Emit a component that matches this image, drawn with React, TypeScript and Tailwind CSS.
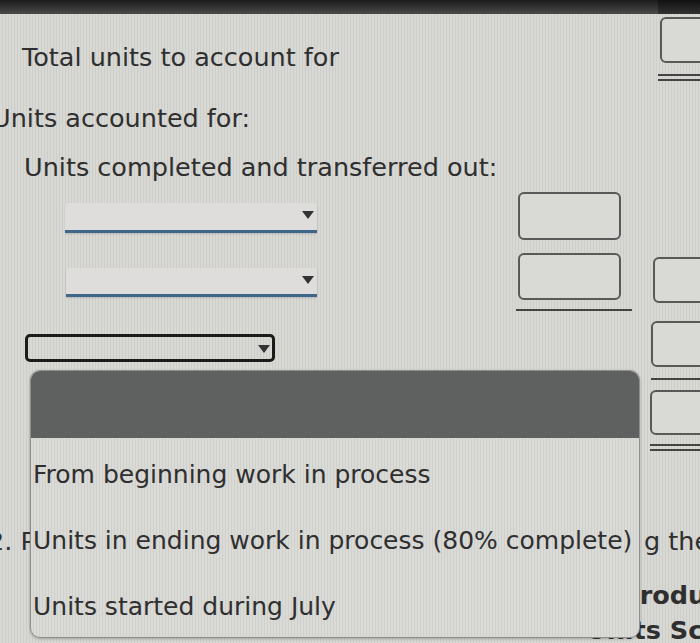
import React from 'react';

function Box({ className = '' }: { className?: string }) {
    return <div className={`shrink-0 rounded-[6px] border-2 border-[#595959] bg-[#d9d9d6] ${className}`}></div>;
}

function Arrow() {
    return (
        <svg width="12" height="8" viewBox="0 0 12 8" className="shrink-0">
            <path d="M0 0 L12 0 L6 8 Z" fill="#333" />
        </svg>
    );
}

function Dropdown({ className = '' }: { className?: string }) {
    return (
        <div className={`flex items-start justify-end rounded-t-[3px] bg-[#dedddb] border-b-[3px] border-[#3f6789] shadow-[0_1px_2px_rgba(0,0,0,0.15)] pr-[3px] pt-[8px] ${className}`}>
            <Arrow />
        </div>
    );
}

export default function App() {
    const options = [
        'From beginning work in process',
        'Units in ending work in process (80% complete)',
        'Units started during July',
    ];

    return (
        <div className="relative w-[700px] h-[643px] overflow-hidden bg-[#d5d5d1] bg-[repeating-linear-gradient(90deg,#d8d8d4_0px,#d8d8d4_2px,#cdcdc9_2px,#cdcdc9_3px)] text-[#2f2f2f] font-['DejaVu_Sans',Verdana,sans-serif] text-[25.5px] leading-[30px]">
            {/* top edge of the screen */}
            <div className="flex h-[14px]">
                <div className="flex-1 bg-gradient-to-b from-[#1c1c1c] to-[#4a4a4a]"></div>
                <div className="w-[42px] bg-gradient-to-b from-[#111] to-[#333]"></div>
            </div>

            {/* row 1 */}
            <div className="flex h-[78px]">
                <div className="w-[518px] shrink-0 pl-[22px] pt-[28px] whitespace-nowrap">Total units to account for</div>
                <div className="w-[134px] shrink-0"></div>
                <div className="w-[60px] shrink-0 pl-[8px] pt-[3px]">
                    <Box className="w-[60px] h-[46px]" />
                    <div className="mt-[11px] -ml-[2px] w-[60px] h-[2px] bg-[#444]"></div>
                    <div className="mt-[3px] -ml-[2px] w-[60px] h-[2px] bg-[#444]"></div>
                </div>
            </div>

            {/* row 2 */}
            <div className="h-[50px] pt-[11px] -ml-[8px] whitespace-nowrap">Units accounted for:</div>

            {/* row 3 */}
            <div className="h-[48px] pt-[10px] pl-[24px] whitespace-nowrap">Units completed and transferred out:</div>

            {/* row 4 */}
            <div className="flex h-[55px]">
                <div className="w-[518px] shrink-0 pl-[65px] pt-[13px]">
                    <Dropdown className="w-[252px] h-[30px]" />
                </div>
                <div className="w-[134px] shrink-0 pt-[2px]">
                    <Box className="w-[103px] h-[48px]" />
                </div>
            </div>

            {/* row 5 */}
            <div className="flex h-[70px]">
                <div className="w-[518px] shrink-0 pl-[66px] pt-[23px]">
                    <Dropdown className="w-[251px] h-[29px]" />
                </div>
                <div className="w-[134px] shrink-0 pt-[8px]">
                    <Box className="w-[103px] h-[47px]" />
                    <div className="mt-[9px] -ml-[2px] w-[116px] h-[2px] bg-[#444]"></div>
                </div>
                <div className="w-[60px] shrink-0 pl-[1px] pt-[12px]">
                    <Box className="w-[60px] h-[46px]" />
                </div>
            </div>

            {/* row 6 */}
            <div className="flex h-[70px]">
                <div className="w-[518px] shrink-0 pl-[25px] pt-[19px]">
                    <div className="flex w-[250px] h-[28px] items-start justify-end rounded-[5px] border-[3px] border-[#1b1b1b] pr-[2px] pt-[8px]">
                        <Arrow />
                    </div>
                </div>
                <div className="w-[133px] shrink-0"></div>
                <div className="w-[60px] shrink-0 pt-[6px]">
                    <Box className="w-[60px] h-[46px]" />
                    <div className="mt-[11px] w-[60px] h-[2px] bg-[#444]"></div>
                </div>
            </div>

            {/* row 7 */}
            <div className="flex h-[70px]">
                <div className="w-[518px] shrink-0"></div>
                <div className="w-[132px] shrink-0"></div>
                <div className="w-[60px] shrink-0 pt-[5px]">
                    <Box className="w-[60px] h-[45px]" />
                    <div className="mt-[9px] w-[60px] h-[2px] bg-[#444]"></div>
                    <div className="mt-[3px] w-[60px] h-[2px] bg-[#444]"></div>
                </div>
            </div>

            {/* text behind the open menu */}
            <div className="flex pt-[71px] whitespace-nowrap">
                <div className="w-[656px] shrink-0 -ml-[12px] overflow-hidden">2. Prepare a cost of production report usin</div>
                <div>g the</div>
            </div>
            <div className="pt-[24px] pl-[621px] font-bold whitespace-nowrap">Produ</div>
            <div className="pt-[5px] pl-[586px] font-bold whitespace-nowrap">Units Sc</div>

            {/* open select menu */}
            <div className="absolute left-[30px] top-[370px] w-[610px] h-[268px] overflow-hidden rounded-[10px] border border-[#8f8f8f] bg-[#d7d7d4] bg-[repeating-linear-gradient(90deg,#dadad7_0px,#dadad7_2px,#d0d0cd_2px,#d0d0cd_3px)] shadow-[0_1px_3px_rgba(0,0,0,0.25)] text-[25px]">
                <div className="h-[67px] bg-[#5f6060]"></div>
                <div className="pt-[4px]">
                    {options.map((opt) => (
                        <div key={opt} className="h-[66px] flex items-center pl-[2px] whitespace-nowrap">
                            {opt}
                        </div>
                    ))}
                </div>
            </div>
        </div>
    );
}
